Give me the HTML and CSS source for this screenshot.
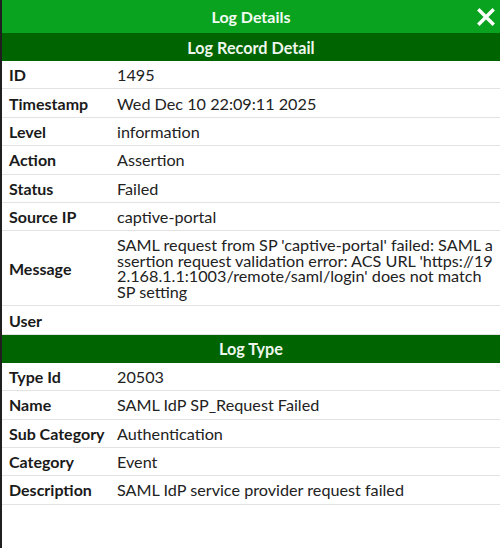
FILE: index.html
```html
<!DOCTYPE html>
<html>
<head>
<meta charset="utf-8">
<link rel="stylesheet" href="styles.css">
</head>
<body>
<div class="dialog">
  <div class="titlebar">
    <span class="title">Log Details</span>
    <button class="close" aria-label="Close">
      <svg width="18" height="18" viewBox="0 0 18 18"><path d="M2.5 2.5 L15.5 15.5 M15.5 2.5 L2.5 15.5" stroke="#fff" stroke-width="3.4" stroke-linecap="square" fill="none"/></svg>
    </button>
  </div>
  <div class="section-head">Log Record Detail</div>
  <div class="rows">
    <div class="row"><div class="label">ID</div><div class="value">1495</div></div>
    <div class="row"><div class="label">Timestamp</div><div class="value">Wed Dec 10 22:09:11 2025</div></div>
    <div class="row"><div class="label">Level</div><div class="value">information</div></div>
    <div class="row"><div class="label">Action</div><div class="value">Assertion</div></div>
    <div class="row"><div class="label">Status</div><div class="value">Failed</div></div>
    <div class="row"><div class="label">Source IP</div><div class="value">captive-portal</div></div>
    <div class="row row-multi"><div class="label">Message</div><div class="value value-multi">SAML request from SP 'captive-portal' failed: SAML assertion request validation error: ACS URL 'https://192.168.1.1:1003/remote/saml/login' does not match <span class="nowrap">SP</span> setting</div></div>
    <div class="row"><div class="label">User</div><div class="value"></div></div>
  </div>
  <div class="section-head">Log Type</div>
  <div class="rows">
    <div class="row"><div class="label">Type Id</div><div class="value">20503</div></div>
    <div class="row"><div class="label">Name</div><div class="value">SAML IdP SP_Request Failed</div></div>
    <div class="row"><div class="label">Sub Category</div><div class="value">Authentication</div></div>
    <div class="row"><div class="label">Category</div><div class="value">Event</div></div>
    <div class="row"><div class="label">Description</div><div class="value">SAML IdP service provider request failed</div></div>
  </div>
</div>
</body>
</html>
```
FILE: styles.css
```css
* { box-sizing: border-box; }
html, body { margin: 0; padding: 0; background: #fff; }
body {
  font-family: Lato, "Open Sans", sans-serif;
  font-size: 16px;
  color: #1e1e1e;
}
.dialog {
  width: 500px;
  height: 548px;
  border-left: 2px solid #1f1f1f;
  background: #fff;
}
.titlebar {
  position: relative;
  height: 33px;
  background: #0aa320;
  display: flex;
  align-items: center;
  justify-content: center;
}
.title {
  color: #f2fbf2;
  font-weight: 700;
  font-size: 16px;
  margin-top: -1px;
}
.close {
  position: absolute;
  right: 4px;
  top: 7px;
  width: 20px;
  height: 20px;
  padding: 0;
  margin: 0;
  border: 0;
  background: transparent;
  display: flex;
  align-items: center;
  justify-content: center;
}
.section-head {
  height: 28px;
  background: #006400;
  color: #eef7ee;
  font-weight: 700;
  font-size: 16.2px;
  display: flex;
  align-items: center;
  justify-content: center;
}
.row {
  display: flex;
  align-items: center;
  border-bottom: 1px solid #e3e3e3;
  height: 28.4px;
}
.row-multi { height: 75px; }
.label {
  width: 115px;
  flex: none;
  padding-left: 7px;
  font-weight: 700;
  color: #1a1a1a;
  line-height: 19px;
}
.value {
  flex: 1;
  min-width: 0;
  font-size: 16.2px;
  line-height: 19px;
  color: #222;
  padding-right: 2px;
}
.value-multi {
  line-height: 15.7px;
  word-break: break-all;
}
.nowrap { white-space: nowrap; }
```
